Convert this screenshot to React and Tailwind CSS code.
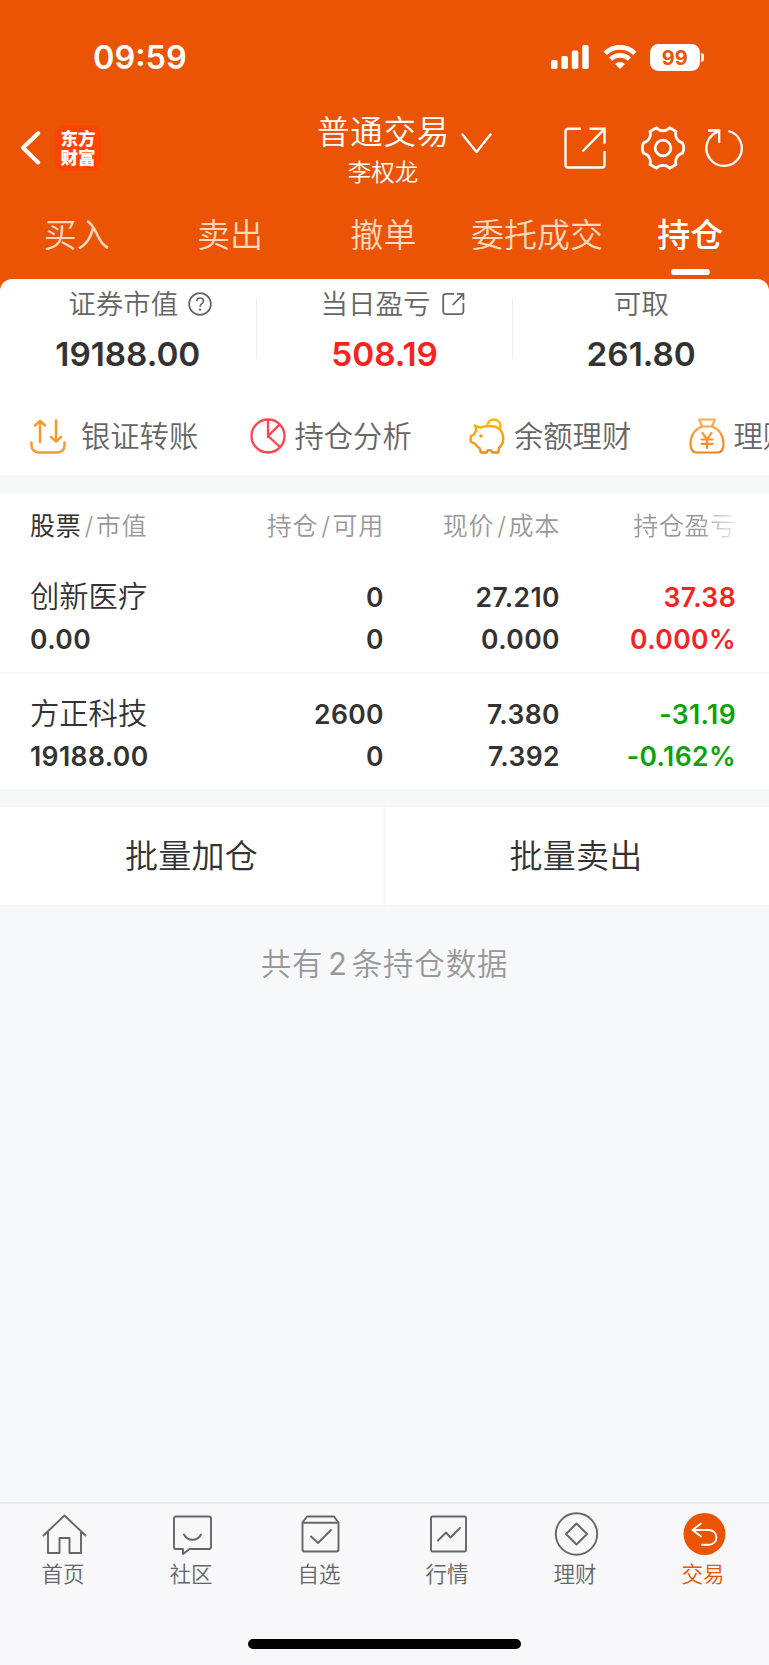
import React from 'react';

const TABS = ['买入', '卖出', '撤单', '委托成交', '持仓'];

const HOLDINGS = [
  {
    name: '创新医疗',
    value: '0.00',
    total: '0',
    available: '0',
    price: '27.210',
    cost: '0.000',
    profit: '37.38',
    rate: '0.000%',
    color: 'text-[#f82222]',
  },
  {
    name: '方正科技',
    value: '19188.00',
    total: '2600',
    available: '0',
    price: '7.380',
    cost: '7.392',
    profit: '-31.19',
    rate: '-0.162%',
    color: 'text-[#0aa30a]',
  },
];

const StatusBar = () => (
  <div className="flex h-[114px] items-center justify-between pl-[93px] pr-[65px]">
    <span className="pt-[2px] text-[32.500px] font-semibold leading-none">09:59</span>
    <div className="flex items-center">
      <svg width="38" height="24" viewBox="0 0 38 24" fill="currentColor">
        <rect x="0" y="15" width="6.5" height="9" rx="1.8" />
        <rect x="10.4" y="11" width="6.5" height="13" rx="1.8" />
        <rect x="20.8" y="5.5" width="6.5" height="18.5" rx="1.8" />
        <rect x="31.2" y="0" width="6.5" height="24" rx="1.8" />
      </svg>
      <svg className="ml-[14px]" width="34" height="24" viewBox="0 0 34 24" fill="none">
        <path d="M2.2 8.4a21 21 0 0 1 29.6 0" stroke="currentColor" strokeWidth="4.8" />
        <path d="M7.6 14.2a13.4 13.4 0 0 1 18.8 0" stroke="currentColor" strokeWidth="4.6" />
        <path d="M17 24l-5-5.1a7.2 7.2 0 0 1 10 0z" fill="currentColor" />
      </svg>
      <div className="ml-[13.500px] flex h-[27px] w-[49.500px] items-center justify-center rounded-[8.5px] bg-white pt-[2px] text-[20px] font-bold leading-none text-[#ea5404]">
        99
      </div>
      <div className="ml-[1.5px] h-[9px] w-[3px] rounded-r-full bg-white" />
    </div>
  </div>
);

const NavBar = () => (
  <div className="flex h-[72px] items-center">
    <div className="-mt-1 flex flex-1 items-center pl-5">
      <svg width="22" height="36" viewBox="0 0 22 36" fill="none" stroke="currentColor" strokeWidth="4.2" strokeLinecap="round" strokeLinejoin="round">
        <path d="M18.2 3.2L3 17.8l15.200 14.600" />
      </svg>
      <div className="ml-[13px] flex size-[46px] flex-col items-center justify-center rounded-[9px] bg-[#ff4300] text-[17.500px] font-black leading-[19px]">
        <span>东方</span>
        <span>财富</span>
      </div>
    </div>
    <div className="relative flex flex-col items-center pt-[2px]">
      <span className="pl-[3px] text-[32.500px] font-[350] leading-[38px] tracking-[0.8px]">普通交易</span>
      <span className="mt-[5px] pl-[2px] text-[23.500px] font-[350] leading-[32px]">李权龙</span>
      <svg className="absolute left-full top-[21px] ml-[11px]" width="31" height="22" viewBox="0 0 31 22" fill="none" stroke="currentColor" strokeWidth="2.400" strokeLinecap="round" strokeLinejoin="round">
        <path d="M1.500 1.500l14 17.500 14-17.500" />
      </svg>
    </div>
    <div className="-mt-1 flex flex-1 items-center justify-end pr-[25px]">
      <svg width="42" height="42" viewBox="0 0 42 42" fill="none" stroke="currentColor" strokeWidth="2.400">
        <path d="M17 1.800H4a2.500 2.500 0 0 0-2.500 2.500v34A2.200 2.200 0 0 0 3.700 40.500h34.600a2.200 2.200 0 0 0 2.200-2.200V24" />
        <path d="M25.500 1.800h15v15M40 2.300L18.500 24.500" />
      </svg>
      <svg className="ml-[35px]" width="44" height="44" viewBox="0 0 44 44" fill="none" stroke="currentColor" strokeWidth="2.800" strokeLinejoin="round">
        <path d="M15.500 1.800C18.500 5.700 25.500 5.700 28.500 1.800L35 5.500C33.500 10.500 36.500 15.700 41.500 16.800C43 20 43 24 41.500 27.200C36.500 28.300 33.500 33.500 35 38.500L28.500 42.200C25.500 38.300 18.500 38.300 15.500 42.200L9 38.500C10.500 33.500 7.500 28.300 2.500 27.200C1 24 1 20 2.500 16.800C7.500 15.700 10.500 10.500 9 5.500Z" />
        <circle cx="22" cy="22" r="7.800" />
      </svg>
      <svg className="ml-[19px]" width="40" height="40" viewBox="0 0 40 40" fill="none" stroke="currentColor" strokeWidth="2.300">
        <path d="M24.300 3a17.700 17.700 0 1 1-9.500.3" />
        <path d="M4 2.500h11.200V15" />
      </svg>
    </div>
  </div>
);

const Tabs = () => (
  <div className="grid h-[93px] grid-cols-5 pr-[2px]">
    {TABS.map((tab, i) => {
      const active = i === TABS.length - 1;
      return (
        <div key={tab} className="flex flex-col items-center pt-[30px]">
          <span
            className={`whitespace-nowrap text-[33px] leading-[38px] ${active ? 'font-medium' : 'font-[350] text-[#ffd8c2]'}`}
          >
            {tab}
          </span>
          {active && <div className="mt-[15px] h-[6px] w-[39px] rounded-full bg-white" />}
        </div>
      );
    })}
  </div>
);

const Stat = ({ label, icon, value, offset = '', color = 'text-[#333]' }) => (
  <div className="flex flex-1 flex-col items-center pt-[8px]">
    <div className={`flex items-center ${offset}`}>
      <span className="text-[27.500px] font-[350] leading-[34px] text-[#666]">{label}</span>
      {icon}
    </div>
    <span className={`mt-[16px] text-[33.300px] font-semibold leading-[34px] ${color}`}>{value}</span>
  </div>
);

const HelpIcon = () => (
  <svg className="ml-[10px]" width="24" height="24" viewBox="0 0 24 24" fill="none" stroke="#666" strokeWidth="1.700">
    <circle cx="12" cy="12" r="10.900" />
    <path d="M8.600 9.200c.2-2 1.600-3.200 3.500-3.200s3.400 1.300 3.400 3c0 2.500-3.400 2.800-3.400 5.700" />
    <circle cx="12" cy="17.600" r="1.200" fill="#666" stroke="none" />
  </svg>
);

const LinkIcon = () => (
  <svg className="ml-[11px]" width="23" height="24" viewBox="0 0 23 24" fill="none" stroke="#666" strokeWidth="1.800">
    <path d="M12 1.900H4a2.800 2.800 0 0 0-2.800 2.800v14.600A2.800 2.800 0 0 0 4 22.100h14.600a2.800 2.800 0 0 0 2.800-2.800V11" />
    <path d="M15 1.900h6.400v6M21 2.300L10.700 13" />
  </svg>
);

const Divider = () => <div className="mt-5 h-[59px] w-px bg-[#ececec]" />;

const Summary = () => (
  <div className="flex h-[105px]">
    <Stat label="证券市值" icon={<HelpIcon />} value="19188.00" offset="pl-[25px]" />
    <Divider />
    <Stat label="当日盈亏" icon={<LinkIcon />} value="508.19" offset="pl-[16px]" color="text-[#f82222]" />
    <Divider />
    <Stat label="可取" value="261.80" />
  </div>
);

const TransferIcon = () => (
  <svg width="36" height="36" viewBox="0 0 36 36" fill="none" stroke="#f59a2f" strokeWidth="2.500" strokeLinecap="round" strokeLinejoin="round">
    <path d="M10 24V3M5 7.500L10 2.800l5 4.700M26 2.500v21M21 19l5 4.700 5-4.700" />
    <path d="M1.500 24.500v3a7 7 0 0 0 7 7h19a7 7 0 0 0 7-7v-3" />
  </svg>
);

const PieIcon = () => (
  <svg width="36" height="36" viewBox="0 0 36 36" fill="none" stroke="#ff4450" strokeWidth="2.300">
    <circle cx="18" cy="18" r="16.500" />
    <path d="M18 1.500V18L29.700 6.400M18 18l12 11" />
  </svg>
);

const PiggyIcon = () => (
  <svg width="36" height="36" viewBox="0 0 36 36" fill="none" stroke="url(#piggy)" strokeWidth="2.400" strokeLinejoin="round">
    <defs>
      <linearGradient id="piggy" x1="0" y1="0" x2="0" y2="36" gradientUnits="userSpaceOnUse">
        <stop stopColor="#ffbe00" />
        <stop offset="1" stopColor="#f78a10" />
      </linearGradient>
    </defs>
    <path d="M6 7.500l5 2.200C13 8.500 15 8.200 18 8.200h5.500C30 8.500 34.300 14 34.300 20.500c0 4.200-1.600 7.200-4.300 9.300l-.7 4.700h-6.100l-1.100-2.300h-3.300l-1.100 2.300h-5.900l-1.200-4.300c-1.800-.8-3.300-2.200-4.300-4.200L1.700 23.500v-5.300l3.500-1.700c.4-1.600 1.200-3 2.300-4.200z" />
    <path d="M18.300 8.200c0-4 2.800-6.700 6.600-6.700 3.700 0 6.600 2.800 6.600 6.500 0 1.700-.6 3.100-1.600 4.300" />
    <circle cx="12" cy="18" r="1.800" fill="#f9a00c" stroke="none" />
  </svg>
);

const MoneyBagIcon = () => (
  <svg width="36" height="36" viewBox="0 0 36 36" fill="none" stroke="url(#bag)" strokeWidth="2.200" strokeLinecap="round" strokeLinejoin="round">
    <defs>
      <linearGradient id="bag" x1="0" y1="0" x2="0" y2="36" gradientUnits="userSpaceOnUse">
        <stop stopColor="#ffae55" />
        <stop offset="1" stopColor="#f58012" />
      </linearGradient>
    </defs>
    <path d="M10 1.500h16l-3 7h-10z" />
    <path d="M13 8.500C6 11 1.500 17.500 1.500 25.500c0 6 1.700 9 6 9h21c4.300 0 6-3 6-9C34.500 17.500 30 11 23 8.500" />
    <path d="M13.500 15l4.500 6.300L22.500 15M18 21.500V30M12.500 21.500h11M12.500 25.800h11" />
  </svg>
);

const Action = ({ icon, label, gap = 'gap-[9px]' }) => (
  <div className={`flex w-[219.500px] shrink-0 items-start ${gap}`}>
    {icon}
    <span className="whitespace-nowrap text-[29.300px] font-[350] leading-[38px] text-[#666]">{label}</span>
  </div>
);

const Actions = () => (
  <div className="flex h-[91px] items-start overflow-hidden pl-[30px] pt-[34px]">
    <Action icon={<TransferIcon />} label="银证转账" gap="gap-[15px]" />
    <Action icon={<PieIcon />} label="持仓分析" />
    <Action icon={<PiggyIcon />} label="余额理财" />
    <Action icon={<MoneyBagIcon />} label="理财" />
  </div>
);

const COLUMNS = 'grid grid-cols-[177px_177px_176px_176px] px-[30px]';

const Slash = () => <span className="pl-[3px] pr-[2px]">/</span>;

const HoldingRow = ({ item }) => (
  <div className={`${COLUMNS} h-[117.500px] border-b-2 border-[#f5f6f8] text-[26.500px] font-semibold leading-[42px] tracking-[0.400px] text-[#333]`}>
    <div className="flex flex-col pt-[19.500px]">
      <span className="text-[29.300px] font-[350] tracking-normal">{item.name}</span>
      <span>{item.value}</span>
    </div>
    <div className="flex flex-col pt-[19.500px] text-right">
      <span>{item.total}</span>
      <span>{item.available}</span>
    </div>
    <div className="flex flex-col pt-[19.500px] text-right">
      <span>{item.price}</span>
      <span>{item.cost}</span>
    </div>
    <div className={`flex flex-col pt-[19.500px] text-right ${item.color}`}>
      <span>{item.profit}</span>
      <span>{item.rate}</span>
    </div>
  </div>
);

const HoldingsTable = () => (
  <div className="mt-[19px] bg-white">
    <div className={`${COLUMNS} h-[62px] items-center pt-[2px] text-[25px] font-[350] leading-[36px] tracking-[0.700px] text-[#999]`}>
      <div>
        <span className="font-normal text-[#333]">股票</span>
        <Slash />
        市值
      </div>
      <div className="text-right">
        持仓
        <Slash />
        可用
      </div>
      <div className="text-right">
        现价
        <Slash />
        成本
      </div>
      <div className="bg-linear-to-r from-[#999] from-80% to-[#99999920] bg-clip-text text-right text-transparent">
        持仓盈亏
      </div>
    </div>
    {HOLDINGS.map(item => (
      <HoldingRow key={item.name} item={item} />
    ))}
  </div>
);

const BOTTOM_TABS = [
  {
    label: '首页',
    icon: <path d="M1.500 22.500L22.500 2.500l21 20M6 19v21h11.500V25h10v15H39V19" />,
  },
  {
    label: '社区',
    icon: (
      <>
        <path d="M6 3.500h33a2 2 0 0 1 2 2v28.500a2 2 0 0 1-2 2H19.500l-6.500 5v-5H6a2 2 0 0 1-2-2V5.500a2 2 0 0 1 2-2z" />
        <path d="M14 21.500c3.500 7 13.500 7 17 0" />
      </>
    ),
  },
  {
    label: '自选',
    icon: (
      <>
        <path d="M4.500 9.500l4.500-6h27l4.500 6v27a2 2 0 0 1-2 2h-32a2 2 0 0 1-2-2zM4.500 9.800h36" />
        <path d="M13 23.500l7 6.500 13-13" />
      </>
    ),
  },
  {
    label: '行情',
    icon: (
      <>
        <rect x="5" y="3.500" width="35" height="35" rx="1.500" />
        <path d="M12 27.500l8-8 4.500 5 9.500-9.500" />
      </>
    ),
  },
  {
    label: '理财',
    icon: (
      <>
        <circle cx="22.500" cy="21" r="20.700" />
        <path d="M22.500 10.500L33 21 22.500 31.500 12 21z" />
      </>
    ),
  },
  {
    label: '交易',
    active: true,
    icon: (
      <>
        <circle cx="22.500" cy="21" r="21" fill="#ea5404" stroke="none" />
        <path d="M19 10.500l-8.500 6.500 8.500 6.500M11 17h16a7.300 7.300 0 0 1 0 14.800h-7" stroke="#fff" />
      </>
    ),
  },
];

const BottomNav = () => (
  <div className="mt-auto flex h-[163px] flex-col items-center border-t-2 border-[#e9eaed] bg-[#f8f8fb]">
    <div className="grid w-full grid-cols-6 pr-px">
      {BOTTOM_TABS.map(({ label, icon, active }) => (
        <div key={label} className="flex flex-col items-center pt-[8.500px]">
          <svg className="overflow-visible" width="45" height="42" viewBox="0 0 45 42" fill="none" stroke="#666" strokeWidth="1.900" strokeLinecap="round" strokeLinejoin="round">
            {icon}
          </svg>
          <span className={`mt-[4px] pr-[2px] text-[21.500px] font-[350] leading-[30px] ${active ? 'text-[#ea5404]' : 'text-[#666]'}`}>
            {label}
          </span>
        </div>
      ))}
    </div>
    <div className="mb-[16px] mt-auto h-[10px] w-[273px] rounded-full bg-black" />
  </div>
);

const App = () => (
  <div className="flex h-[1665px] w-[769px] flex-col overflow-hidden bg-[#f7f8fa] font-['Inter','Noto_Sans_CJK_SC',sans-serif]">
    <header className="h-[291px] shrink-0 bg-[#ea5404] text-white">
      <StatusBar />
      <NavBar />
      <Tabs />
    </header>

    {/* Account summary, rounded over the header */}
    <section className="-mt-3 h-[196px] shrink-0 rounded-t-[12px] bg-white">
      <Summary />
      <Actions />
    </section>

    <HoldingsTable />

    <div className="mt-4 grid h-[98px] shrink-0 grid-cols-[383px_1fr] gap-[3px] text-[33px] font-[350] leading-[98px] tracking-[0.300px] text-[#333]">
      <div className="bg-white text-center">批量加仓</div>
      <div className="bg-white pr-[3px] text-center">批量卖出</div>
    </div>

    <p className="mt-[38px] text-center text-[30.500px] font-[350] leading-[42px] tracking-[0.800px] text-[#999]">
      共有<span className="pl-[5px] pr-[4px] font-normal">2</span>条持仓数据
    </p>

    <BottomNav />
  </div>
);

export default App;
